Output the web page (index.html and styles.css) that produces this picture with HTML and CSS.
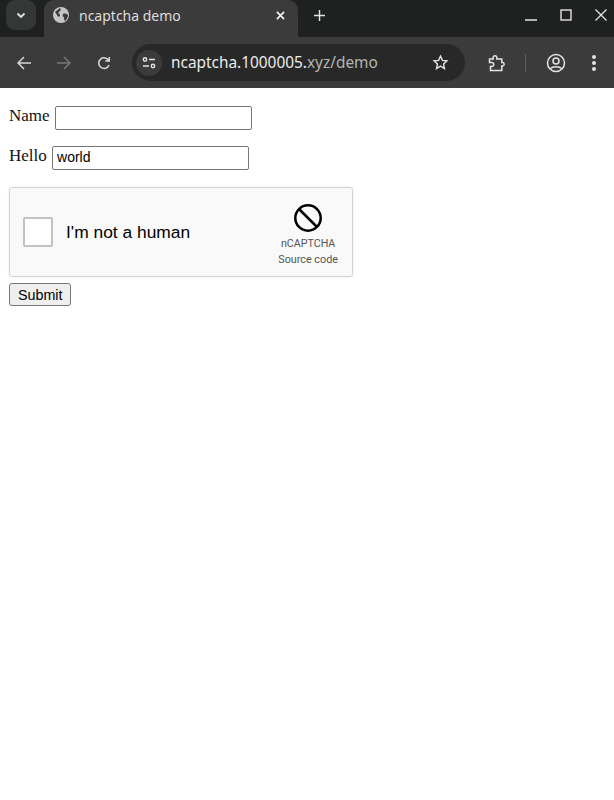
FILE: index.html
```html
<!DOCTYPE html>
<html lang="en">
<head>
    <meta charset="UTF-8">
    <meta name="viewport" content="width=device-width, initial-scale=1.0">
    <title>ncaptcha demo</title>
    <link rel="stylesheet" href="styles.css">
</head>
<body>
<header class="browser">
    <div class="tab-strip">
        <div class="tab-search">
            <svg width="12" height="12" viewBox="0 0 12 12" fill="none" stroke="#e3e3e3" stroke-width="1.8"><path d="M2.5 4.5 6 8l3.5-3.5"/></svg>
        </div>
        <div class="tab">
            <svg class="tab-icon" width="16" height="16" viewBox="0 0 16 16"><circle cx="8" cy="8" r="8" fill="#c4c7c5"/><path d="M2 5c2-1 3-3 5-4 1 1 1 2 0 3L5 6c1 1 2 1 2 2.500S5 10 4.500 9 3 6 2 5zM10 7c2-1 4 0 5 1 0 2-1 4-3 6-1-1-1-2-1-3s-2-2-1-4z" fill="#3b3b3b"/></svg>
            <span class="tab-title">ncaptcha demo</span>
            <svg class="tab-close" width="9" height="9" viewBox="0 0 10 10" stroke="#f0f0f0" stroke-width="1.9"><path d="M1 1l8 8M9 1l-8 8"/></svg>
        </div>
        <svg class="new-tab" width="11" height="11" viewBox="0 0 12 12" stroke="#e3e3e3" stroke-width="1.6"><path d="M6 0v12M0 6h12"/></svg>
        <div class="window-buttons">
            <svg width="12" height="12" viewBox="0 0 12 12" stroke="#e3e3e3" stroke-width="1.5"><path d="M0 11h12"/></svg>
            <svg width="12" height="12" viewBox="0 0 12 12" fill="none" stroke="#e3e3e3" stroke-width="1.400"><rect x="1" y="1" width="10" height="10"/></svg>
            <svg width="12" height="12" viewBox="0 0 12 12" stroke="#e3e3e3" stroke-width="1.300"><path d="M.5.500l11 11M11.500.500l-11 11"/></svg>
        </div>
    </div>
    <div class="toolbar">
        <svg class="nav-icon" width="14" height="14" viewBox="0 0 14 14" fill="none" stroke="#d8d8d8" stroke-width="1.500"><path d="M14 7H1.500M7 1 1 7l6 6"/></svg>
        <svg class="nav-icon" width="14" height="14" viewBox="0 0 14 14" fill="none" stroke="#777" stroke-width="1.500"><path d="M0 7h12.500M7 1l6 6-6 6"/></svg>
        <svg class="nav-icon" width="14" height="14" viewBox="0 0 14 14" fill="none" stroke="#d8d8d8" stroke-width="1.500"><path d="M12 9a5.300 5.300 0 1 1-.2-4.200M12.300 1v4h-4"/></svg>
        <div class="omnibox">
            <div class="site-info">
                <svg width="16" height="14" viewBox="0 0 16 14" fill="none" stroke="#e3e3e3" stroke-width="1.400"><circle cx="4" cy="3.500" r="1.700"/><path d="M8 3.500h6M2 10h6"/><circle cx="12" cy="10" r="1.700"/></svg>
            </div>
            <span class="url">ncaptcha.1000005.<span class="url-dim">xyz/demo</span></span>
            <svg class="star" width="17" height="17" viewBox="0 0 24 24" fill="none" stroke="#e3e3e3" stroke-width="2"><path d="M12 3l2.700 6 6.300.7-4.700 4.300 1.300 6.500L12 17.200 6.400 20.500 7.700 14 3 9.700 9.300 9z"/></svg>
        </div>
        <svg class="extensions" width="18" height="18" viewBox="0 0 18 18" fill="none" stroke="#e3e3e3" stroke-width="1.500"><path d="M1.500 5h3.700V3.500a1.800 1.800 0 0 1 3.600 0V5h5v3.500h1a1.800 1.800 0 0 1 0 3.500h-1v4.500H2.500v-4h1.200a2 2 0 0 0 0-4H1.500z"/></svg>
        <div class="divider"></div>
        <svg class="profile" width="20" height="20" viewBox="0 0 20 20" fill="none" stroke="#e3e3e3" stroke-width="1.500"><circle cx="10" cy="10" r="8.500"/><circle cx="10" cy="8" r="3"/><path d="M4.500 15.500c2-2.500 9-2.500 11 0"/></svg>
        <div class="menu-dots"><span></span><span></span><span></span></div>
    </div>
</header>

<form class="demo-form">
    <p class="field">Name <input type="text" class="name-input"></p>
    <p class="field">Hello <input type="text" class="hello-input" value="world"></p>
    <div class="captcha">
        <div class="captcha-check"></div>
        <span class="captcha-label">I'm not a human</span>
        <div class="captcha-brand">
            <svg width="30" height="30" viewBox="0 0 30 30" fill="none" stroke="#000" stroke-width="2.500"><circle cx="15" cy="15" r="12.700"/><path d="M6 6l18 18"/></svg>
            <span class="brand-name">nCAPTCHA</span>
            <span class="brand-link">Source code</span>
        </div>
    </div>
    <button type="button" class="submit">Submit</button>
</form>
</body>
</html>
```

FILE: styles.css
```css
body {
    margin: 0;
    background-color: white;
    color: #111;
    font-family: 'Liberation Serif', serif;
    font-size: 17px;
}

.browser {
    font-family: 'Noto Sans', sans-serif;
    color: #e3e3e3;
}

.tab-strip {
    display: flex;
    align-items: flex-end;
    height: 37px;
    background-color: #1f2020;
}

.tab-search {
    display: flex;
    align-items: center;
    justify-content: center;
    align-self: flex-start;
    width: 30px;
    height: 30px;
    margin-left: 6px;
    border-radius: 9px;
    background-color: #353636;
}

.tab {
    display: flex;
    align-items: center;
    width: 254px;
    height: 37px;
    margin-left: 8px;
    padding: 0 13px 7px 9px;
    box-sizing: border-box;
    border-radius: 10px 10px 0 0;
    background-color: #3b3b3b;
}

.tab-title {
    flex: 1;
    margin-left: 10px;
    font-size: 14px;
    color: #dcdcdc;
}

.new-tab {
    align-self: flex-start;
    margin: 10px 0 0 16px;
}

.window-buttons {
    display: flex;
    align-self: flex-start;
    gap: 23px;
    margin: 9px 0 0 auto;
    padding-right: 7px;
}

.toolbar {
    display: flex;
    align-items: center;
    height: 51px;
    padding: 0 0 0 17px;
    box-sizing: border-box;
    background-color: #3b3b3b;
}

.nav-icon {
    margin-right: 26px;
}

.nav-icon:nth-child(3) {
    margin-right: 21px;
}

.omnibox {
    display: flex;
    align-items: center;
    width: 333px;
    height: 37px;
    padding: 0 16px 0 4px;
    box-sizing: border-box;
    border-radius: 19px;
    background-color: #282828;
}

.site-info {
    display: flex;
    align-items: center;
    justify-content: center;
    width: 26px;
    height: 26px;
    border-radius: 50%;
    background-color: #3b3b3b;
}

.url {
    flex: 1;
    margin-left: 9px;
    font-size: 15.400px;
    color: #ececec;
}

.url-dim {
    color: #b4b4b4;
}

.extensions {
    margin-left: 23px;
}

.divider {
    width: 1px;
    height: 18px;
    margin-left: 19px;
    background-color: #5f5f5f;
}

.profile {
    margin-left: 20px;
}

.menu-dots {
    display: flex;
    flex-direction: column;
    gap: 2px;
    margin-left: 26px;
}

.menu-dots span {
    width: 4px;
    height: 4px;
    border-radius: 50%;
    background-color: #e3e3e3;
}

.demo-form {
    padding: 2px 9px 0;
}

.field {
    margin: 16px 0;
}

.field input {
    box-sizing: border-box;
    width: 197px;
    height: 24px;
    margin-left: 1px;
    padding: 0 4px 2px;
    border: 1px solid #767676;
    border-radius: 2px;
    font-family: 'Liberation Sans', sans-serif;
    font-size: 14px;
    vertical-align: -1px;
}

.captcha {
    display: flex;
    align-items: center;
    width: 344px;
    height: 90px;
    margin-top: 17px;
    box-sizing: border-box;
    padding: 0 14px 0 13px;
    border: 1px solid #d3d3d3;
    border-radius: 3px;
    background-color: #f9f9f9;
    box-shadow: 0 0 3px rgba(0, 0, 0, 0.08);
}

.captcha-check {
    width: 30px;
    height: 30px;
    box-sizing: border-box;
    border: 2px solid #c1c1c1;
    border-radius: 2px;
    background-color: white;
}

.captcha-label {
    flex: 1;
    margin-left: 13px;
    font-family: 'Liberation Sans', sans-serif;
    font-size: 17.400px;
    color: #000;
}

.captcha-brand {
    display: flex;
    flex-direction: column;
    align-items: center;
    padding-top: 5px;
    font-family: Roboto, sans-serif;
    font-size: 10.700px;
    color: #555;
}

.brand-name {
    margin-top: 5px;
    line-height: 12px;
}

.brand-link {
    margin-top: 3px;
    line-height: 14px;
    font-size: 10.800px;
}

.submit {
    display: block;
    height: 23px;
    margin-top: 6px;
    padding: 1px 7px 1px 8px;
    border: 1px solid #767676;
    border-radius: 3px;
    background-color: #efefef;
    color: #000;
    font-family: 'Liberation Sans', sans-serif;
    font-size: 14.300px;
}
```
